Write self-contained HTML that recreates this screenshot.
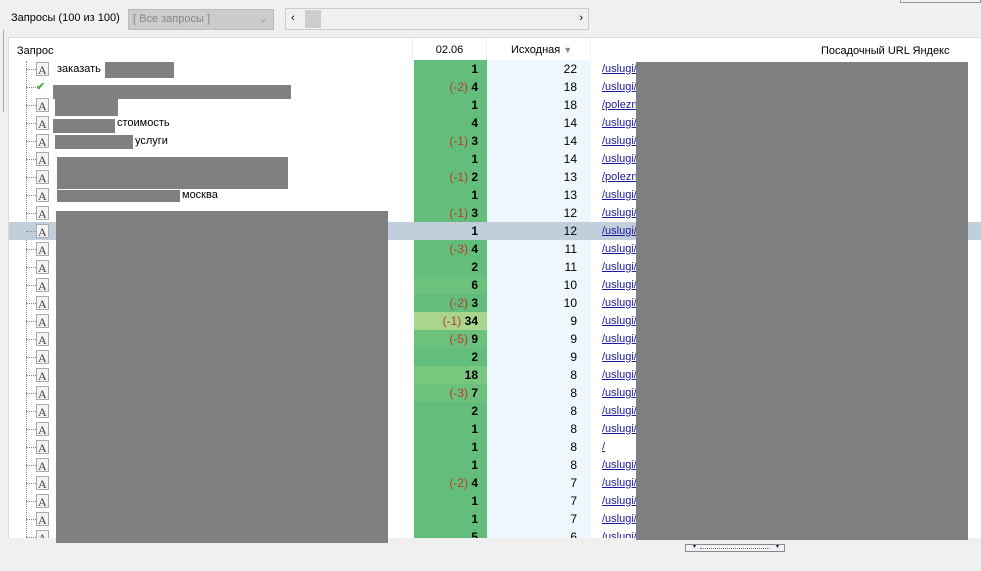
<!DOCTYPE html>
<html><head><meta charset="utf-8"><style>
*{margin:0;padding:0;box-sizing:border-box}
body{width:981px;height:571px;background:#f0f0f0;font-family:"Liberation Sans",sans-serif;font-size:11px;color:#000;position:relative;overflow:hidden}
.a{position:absolute}
.panel{left:8px;top:37px;width:973px;height:501px;background:#fff;border-top:1px solid #dcdcdc;border-left:1px solid #dcdcdc;overflow:hidden}
.r{position:absolute;left:0;width:973px;height:18px;line-height:18px}
.g{position:absolute;left:405px;width:73px;height:18px;text-align:right;padding-right:9px;background:#63be7b;font-weight:bold;font-size:12px}
.g i{font-style:normal;font-weight:normal;color:#c0392b}
.b{position:absolute;left:478px;width:104px;height:18px;background:#eef7fe;text-align:right;padding-right:14px;font-size:12px}
.u{position:absolute;left:593px;color:#1a1a9c;text-decoration:underline}
.ic{position:absolute;left:27px;top:2px;width:13px;height:14px;border:1px solid #aaa;background:#f4f4f4}
.ic:after{content:"A";position:absolute;left:1px;top:-2px;font-size:12px;color:#444;font-family:"Liberation Serif",serif}
.ln{position:absolute;left:17px;top:9px;width:10px;border-top:1px dotted #888}
.t{position:absolute;left:48px}
</style></head><body>
<div class="a" style="left:0;top:30px;width:4px;height:82px;border-right:1px solid #aaa"></div>
<div class="a" style="left:11px;top:12px">Запросы (100 из 100)</div>
<div class="a" style="left:128px;top:9px;width:146px;height:21px;background:#ccc;border:1px solid #bbb;color:#888;padding:3px 4px">[ Все запросы ]<span style="position:absolute;right:5px;top:2px;color:#999">⌄</span></div>
<div class="a" style="left:285px;top:8px;width:304px;height:22px;background:#f0f0f0;border:1px solid #ccc"><span class="a" style="left:5px;top:3px">‹</span><div class="a" style="left:19px;top:1px;width:16px;height:18px;background:#cdcdcd"></div><span class="a" style="right:5px;top:3px">›</span></div>
<div class="a" style="left:900px;top:0;width:81px;height:3px;border:1px solid #999;border-top:none"></div>
<div class="a panel">
<div class="a" style="left:0;top:0;width:404px;height:22px;border-right:1px solid #eee"></div>
<div class="a" style="left:8px;top:7px">Запрос</div>
<div class="a" style="left:404px;top:0;width:74px;height:22px;border-right:1px solid #eee;text-align:center;line-height:24px">02.06</div>
<div class="a" style="left:478px;top:0;width:104px;height:22px;border-right:1px solid #eee;line-height:24px;padding-left:24px">Исходная <span style="color:#888;font-size:9px">▼</span></div>
<div class="a" style="left:812px;top:7px">Посадочный URL Яндекс</div>
<div class="a" style="left:17px;top:23px;height:478px;border-left:1px dotted #888"></div>
<div class="r" style="top:22px"><div class="ln"></div><div class="ic"></div><div class="g">1</div><div class="b">22</div><div class="u">/uslugi/</div><span class="t">заказать</span></div>
<div class="r" style="top:40px"><div class="ln"></div><span class="a" style="left:27px;color:#4caf50;font-weight:bold">✔</span><div class="g"><i>(-2)</i> 4</div><div class="b">18</div><div class="u">/uslugi/</div></div>
<div class="r" style="top:58px"><div class="ln"></div><div class="ic"></div><div class="g">1</div><div class="b">18</div><div class="u">/polezn</div></div>
<div class="r" style="top:76px"><div class="ln"></div><div class="ic"></div><div class="g">4</div><div class="b">14</div><div class="u">/uslugi/</div><span class="t" style="left:108px">стоимость</span></div>
<div class="r" style="top:94px"><div class="ln"></div><div class="ic"></div><div class="g"><i>(-1)</i> 3</div><div class="b">14</div><div class="u">/uslugi/</div><span class="t" style="left:126px">услуги</span></div>
<div class="r" style="top:112px"><div class="ln"></div><div class="ic"></div><div class="g">1</div><div class="b">14</div><div class="u">/uslugi/</div></div>
<div class="r" style="top:130px"><div class="ln"></div><div class="ic"></div><div class="g"><i>(-1)</i> 2</div><div class="b">13</div><div class="u">/polezn</div></div>
<div class="r" style="top:148px"><div class="ln"></div><div class="ic"></div><div class="g">1</div><div class="b">13</div><div class="u">/uslugi/</div><span class="t" style="left:173px">москва</span></div>
<div class="r" style="top:166px"><div class="ln"></div><div class="ic"></div><div class="g"><i>(-1)</i> 3</div><div class="b">12</div><div class="u">/uslugi/</div></div>
<div class="r" style="top:184px;background:#c1cfdc"><div class="ln"></div><div class="ic"></div><div class="g" style="background:#c1cfdc">1</div><div class="b" style="background:#c1cfdc">12</div><div class="u">/uslugi/</div></div>
<div class="r" style="top:202px"><div class="ln"></div><div class="ic"></div><div class="g"><i>(-3)</i> 4</div><div class="b">11</div><div class="u">/uslugi/</div></div>
<div class="r" style="top:220px"><div class="ln"></div><div class="ic"></div><div class="g">2</div><div class="b">11</div><div class="u">/uslugi/</div></div>
<div class="r" style="top:238px"><div class="ln"></div><div class="ic"></div><div class="g" style="background:#6cc17c">6</div><div class="b">10</div><div class="u">/uslugi/</div></div>
<div class="r" style="top:256px"><div class="ln"></div><div class="ic"></div><div class="g"><i>(-2)</i> 3</div><div class="b">10</div><div class="u">/uslugi/</div></div>
<div class="r" style="top:274px"><div class="ln"></div><div class="ic"></div><div class="g" style="background:#a9d68a"><i>(-1)</i> 34</div><div class="b">9</div><div class="u">/uslugi/</div></div>
<div class="r" style="top:292px"><div class="ln"></div><div class="ic"></div><div class="g" style="background:#6cc17c"><i>(-5)</i> 9</div><div class="b">9</div><div class="u">/uslugi/</div></div>
<div class="r" style="top:310px"><div class="ln"></div><div class="ic"></div><div class="g">2</div><div class="b">9</div><div class="u">/uslugi/</div></div>
<div class="r" style="top:328px"><div class="ln"></div><div class="ic"></div><div class="g" style="background:#79c67d">18</div><div class="b">8</div><div class="u">/uslugi/</div></div>
<div class="r" style="top:346px"><div class="ln"></div><div class="ic"></div><div class="g" style="background:#6cc17c"><i>(-3)</i> 7</div><div class="b">8</div><div class="u">/uslugi/</div></div>
<div class="r" style="top:364px"><div class="ln"></div><div class="ic"></div><div class="g">2</div><div class="b">8</div><div class="u">/uslugi/</div></div>
<div class="r" style="top:382px"><div class="ln"></div><div class="ic"></div><div class="g">1</div><div class="b">8</div><div class="u">/uslugi/</div></div>
<div class="r" style="top:400px"><div class="ln"></div><div class="ic"></div><div class="g">1</div><div class="b">8</div><div class="u">/</div></div>
<div class="r" style="top:418px"><div class="ln"></div><div class="ic"></div><div class="g">1</div><div class="b">8</div><div class="u">/uslugi/</div></div>
<div class="r" style="top:436px"><div class="ln"></div><div class="ic"></div><div class="g"><i>(-2)</i> 4</div><div class="b">7</div><div class="u">/uslugi/</div></div>
<div class="r" style="top:454px"><div class="ln"></div><div class="ic"></div><div class="g">1</div><div class="b">7</div><div class="u">/uslugi/</div></div>
<div class="r" style="top:472px"><div class="ln"></div><div class="ic"></div><div class="g">1</div><div class="b">7</div><div class="u">/uslugi/</div></div>
<div class="r" style="top:490px"><div class="ln"></div><div class="ic"></div><div class="g">5</div><div class="b">6</div><div class="u">/uslugi/</div></div>
</div>
<div class="a" style="left:105px;top:62px;width:69px;height:16px;background:#808080"></div>
<div class="a" style="left:53px;top:85px;width:238px;height:14px;background:#808080"></div>
<div class="a" style="left:55px;top:99px;width:63px;height:17px;background:#808080"></div>
<div class="a" style="left:53px;top:119px;width:62px;height:14px;background:#808080"></div>
<div class="a" style="left:55px;top:135px;width:78px;height:14px;background:#808080"></div>
<div class="a" style="left:57px;top:157px;width:231px;height:32px;background:#808080"></div>
<div class="a" style="left:57px;top:190px;width:123px;height:12px;background:#808080"></div>
<div class="a" style="left:56px;top:211px;width:332px;height:332px;background:#808080"></div>
<div class="a" style="left:636px;top:62px;width:332px;height:478px;background:#808080"></div>
<div class="a" style="left:685px;top:544px;width:100px;height:8px;border:1px solid #888;background:#f4f4f4;overflow:hidden">
<span class="a" style="left:5px;top:-2px;font-size:7px;color:#1a1a6c">▼</span>
<div class="a" style="left:14px;top:3px;width:70px;border-top:1px dotted #777"></div>
<span class="a" style="left:88px;top:-2px;font-size:7px;color:#1a1a6c">▼</span></div>
</body></html>
